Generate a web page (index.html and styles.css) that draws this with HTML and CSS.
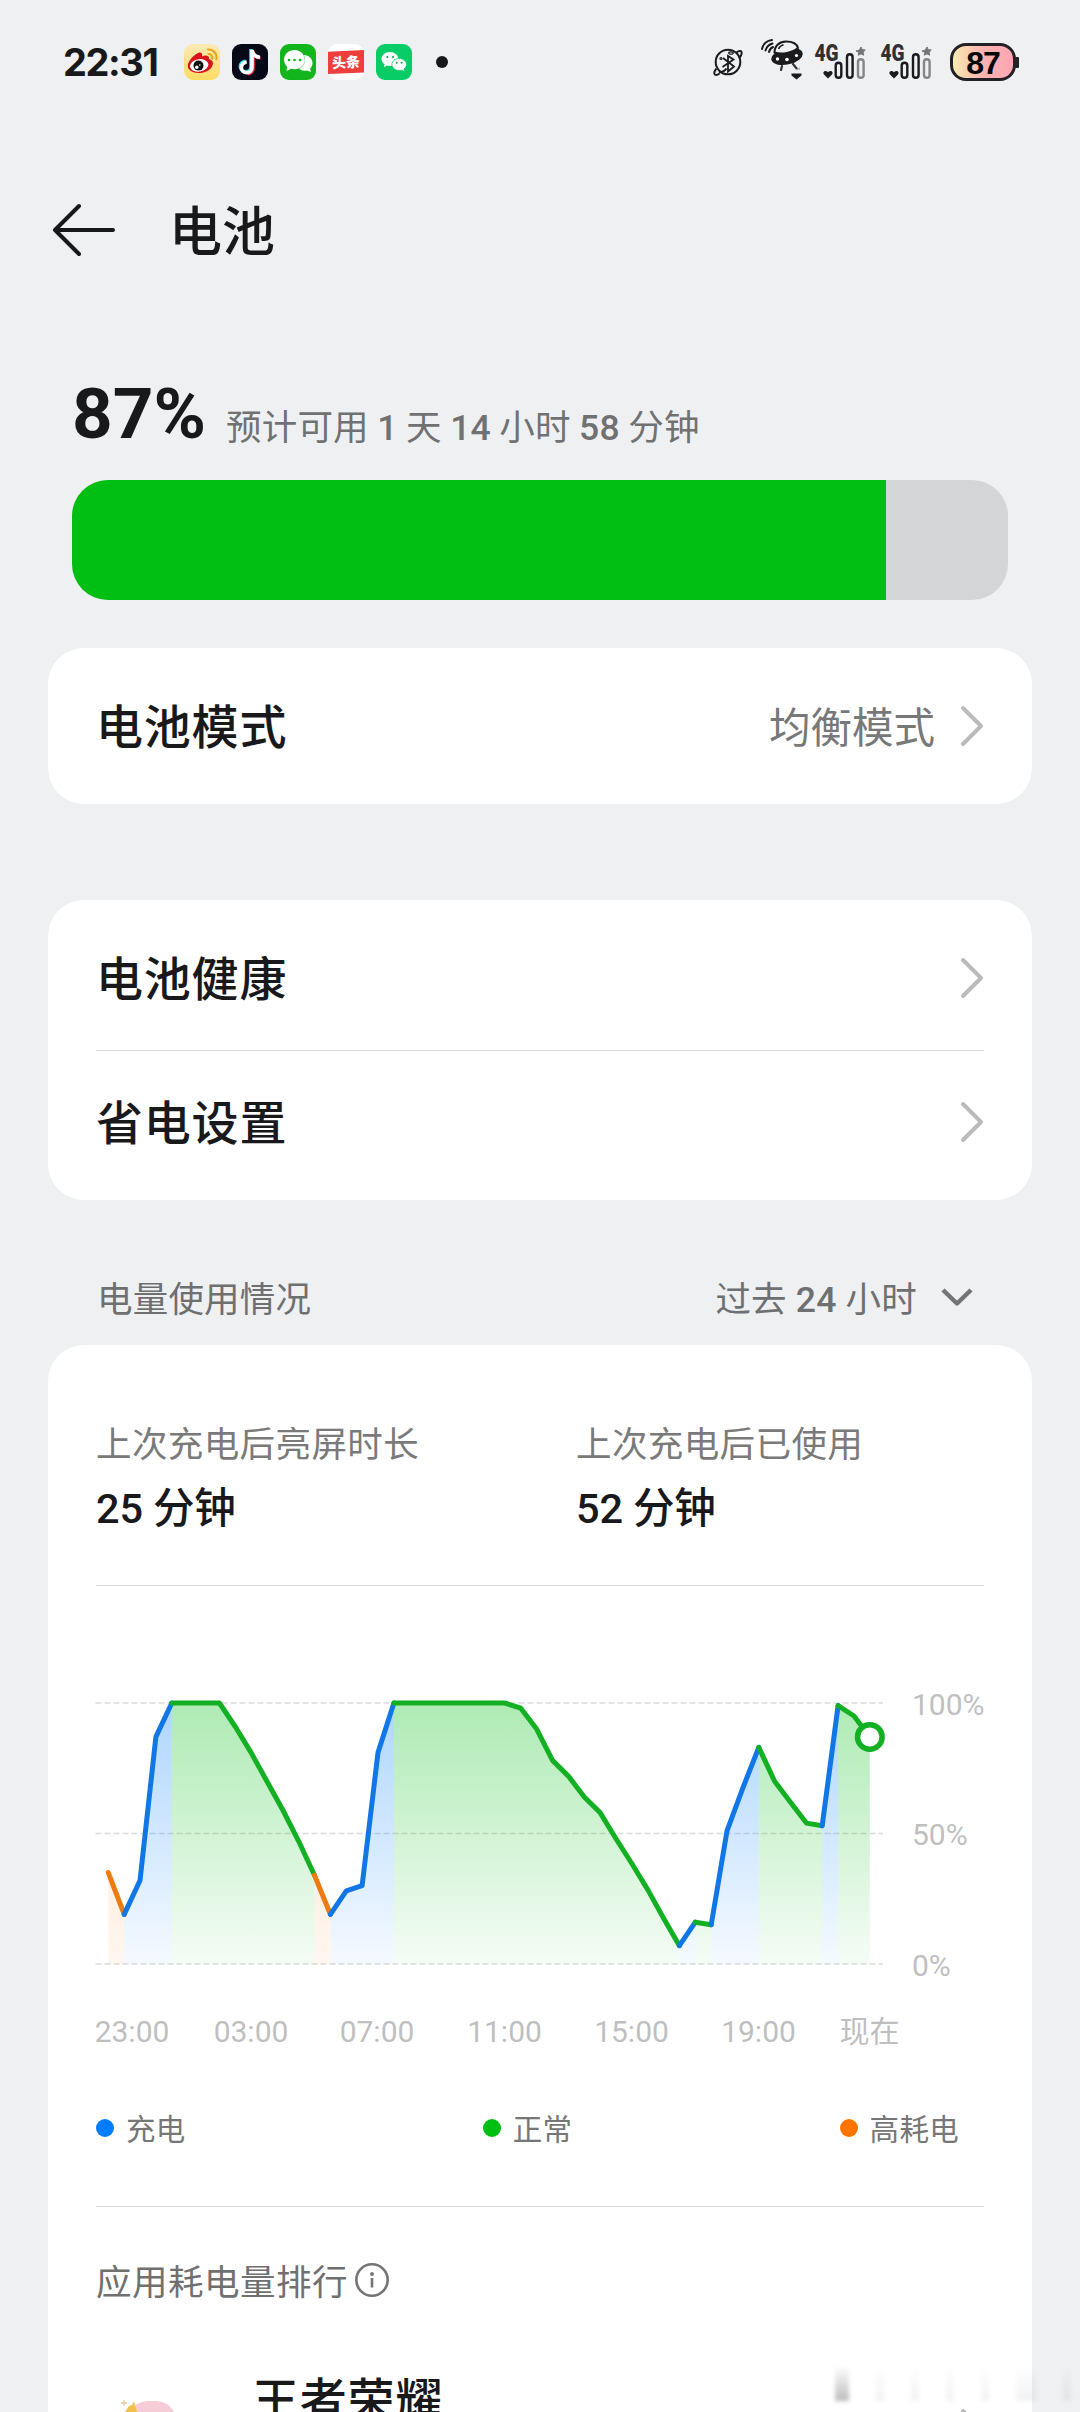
FILE: index.html
```html
<!DOCTYPE html>
<html lang="zh-CN">
<head>
<meta charset="utf-8">
<title>电池</title>
<link rel="stylesheet" href="styles.css">
</head>
<body>
<div class="screen">
  <header class="status">
    <span class="clock">22:31</span>
    <div class="apps">
      <svg class="app" viewBox="0 0 36 36">
        <defs><linearGradient id="wb" x1="0" y1="0" x2="0" y2="1"><stop offset="0" stop-color="#fbe9b4"/><stop offset="1" stop-color="#fcdc62"/></linearGradient></defs>
        <rect width="36" height="36" rx="9" fill="url(#wb)"/>
        <path d="M3.800 22c0-5 6.500-12 11-13.300 2.500-.7 4 .8 3.200 3.800 3-1.400 7.500-1.600 7 2.500 3 1 4.800 3 3.600 6.200C27 26 21.500 29 14.500 29 8.500 29 3.800 26 3.800 22z" fill="#d9141e"/>
        <ellipse cx="15.200" cy="21.400" rx="9.300" ry="6.200" fill="#fff" transform="rotate(-8 15.200 21.400)"/>
        <circle cx="14.500" cy="21.600" r="5" fill="#111"/>
        <circle cx="12.800" cy="23.200" r="1.700" fill="#fff"/><circle cx="15.800" cy="21" r=".8" fill="#fff"/>
        <path d="M24 5.500a8 8 0 0 1 8.300 9.800M24.500 10a4 4 0 0 1 3.800 4.600" fill="none" stroke="#eba51e" stroke-width="2.200" stroke-linecap="round"/>
      </svg>
      <svg class="app" viewBox="0 0 36 36">
        <rect width="36" height="36" rx="9" fill="#040817"/>
        <g fill="none" stroke-width="3.600">
          <path d="M19 5v17.500a5.300 5.300 0 1 1-5.300-5.300M19 6c.8 4 3.500 6.500 8 6.800" stroke="#35e2e8"/>
          <path d="M21 7v17.500a5.300 5.300 0 0 1-5.300 5.300M21 7.500c.8 4 3.500 6 7.500 6.300" stroke="#f52d55"/>
          <path d="M20 6v17.500a5.300 5.300 0 1 1-5.300-5.300M20 6c.8 4.500 3.500 7 8 7.300" stroke="#fff"/>
        </g>
      </svg>
      <svg class="app" viewBox="0 0 36 36">
        <rect width="36" height="36" rx="9" fill="#13b51c"/>
        <path d="M24 11c5 .6 8.500 3.500 8.500 8 0 2.200-.9 4.200-2.400 5.600L31 28l-4-1.600c-3 .8-6 .1-7.800-1.600 5-2.300 7.300-8 4.800-13.800z" fill="#fff"/>
        <path d="M14.500 6C8.800 6 4 10.200 4 15.800c0 2.800 1.200 5.200 3.200 6.900L6.500 27l4.600-2.300c1 .3 2.200.5 3.400.5 6 0 10.300-4.200 10.300-9.500S20.300 6 14.500 6z" fill="#fff"/>
        <circle cx="9" cy="16" r="1.300" fill="#13b51c"/><circle cx="14.500" cy="16" r="1.300" fill="#13b51c"/><circle cx="20" cy="16" r="1.300" fill="#13b51c"/>
      </svg>
      <svg class="app" viewBox="0 0 36 36">
        <rect width="36" height="36" rx="9" fill="#fff"/>
        <path d="M0 7.800L36 6v22.500L0 30z" fill="#ee3f3d"/>
        <text x="18" y="23.500" text-anchor="middle" class="toutiao" transform="rotate(-3 18 18)">头条</text>
      </svg>
      <svg class="app" viewBox="0 0 36 36">
        <rect width="36" height="36" rx="9" fill="#08cd66"/>
        <path d="M14 8c-4.700 0-8.400 3-8.400 6.900 0 2.200 1.200 4.100 3 5.400L8 23l3-1.500c1 .3 2 .4 3 .4 4.600 0 8.400-3.100 8.400-7S18.600 8 14 8z" fill="#fff"/>
        <path d="M23.200 14.500c4 0 7.300 2.700 7.300 6 0 1.900-1 3.500-2.600 4.600l.5 2.500-2.600-1.400c-.8.200-1.700.3-2.600.3-4 0-7.300-2.700-7.300-6s3.300-6 7.300-6z" fill="#fff" stroke="#08cd66" stroke-width=".8"/>
        <g fill="#08a553"><circle cx="11.300" cy="13" r="1.100"/><circle cx="17" cy="13" r="1.100"/><circle cx="20.800" cy="18.700" r="1"/><circle cx="25.600" cy="18.700" r="1"/></g>
      </svg>
    </div>
    <span class="more-dot"></span>
    <div class="system">
      <svg class="planet" viewBox="0 0 30 30" fill="none" stroke="#1b1b1d" stroke-width="2">
        <circle cx="15" cy="15" r="12.300"/>
        <path d="M23.500 5.500c2.500-2 5-1.800 5.200 0 .2 1.700-1.200 4-2.500 5.500M6.500 26.500C4 28.500 1.500 28.500 1.300 26.500c-.2-1.500 1-3.500 2-4.800M6 25.500c3.500-.5 6.500-2.500 7.500-4"/>
        <path d="M10 11l11 8.500-6 5V9l5.500 3.500L9.500 20" stroke-width="1.800"/>
        <circle cx="8" cy="11.500" r="1" stroke-width="1.200"/><ellipse cx="18" cy="6" rx="2.300" ry="1.200" stroke-width="1.200"/>
      </svg>
      <svg class="ufo" viewBox="0 0 42 42">
        <g fill="none" stroke="#1b1b1d" stroke-width="2" stroke-linecap="round"><path d="M1 10C2 5 6 1.500 11 1M4.500 11.500c1-3.500 3.500-6 7-7M8 13c.5-2.300 2-4 4-5"/></g>
        <ellipse cx="26" cy="17.500" rx="16" ry="8" fill="#1b1b1d" transform="rotate(-12 26 17.500)"/>
        <path d="M13.500 13.500C13.500 7 18.500 2.500 25 2.500S36 5 37 9c-5 4.500-16 7-23.500 4.500z" fill="#eff0f2" stroke="#1b1b1d" stroke-width="2"/>
        <path d="M17.500 10c1-2.300 2.500-3.700 5-4.300" fill="none" stroke="#1b1b1d" stroke-width="1.500"/>
        <circle cx="16.500" cy="20" r="1.700" fill="#fff"/><circle cx="26" cy="20.500" r="1.800" fill="#fff"/><circle cx="35.500" cy="16.500" r="1.600" fill="#fff"/>
        <path d="M21 27l-1 4M32 25l4 5" stroke="#333" stroke-width="2.200" stroke-linecap="round"/>
        <path d="M34 31l5-3v3z" fill="#bbb"/>
        <path d="M30.500 34.500h10v2l-5 4-5-4z" fill="#1b1b1d"/>
      </svg>
      <div class="cell"><svg viewBox="0 0 50 36">
        <text x="-.5" y="16.500" class="net" textLength="24" lengthAdjust="spacingAndGlyphs">4G</text>
        <path d="M13 34.500l-4-4c-2-2.500 1.500-5 4-2.200 2.500-2.800 6-.3 4 2.200z" fill="#1b1b1d"/>
        <g fill="none" stroke-width="2.400"><rect x="20.700" y="18.700" width="5.600" height="15" rx="2.800" stroke="#1b1b1d"/><rect x="32" y="10.200" width="5.600" height="23.500" rx="2.800" stroke="#1b1b1d"/><rect x="43" y="15.200" width="5.600" height="18.500" rx="2.800" stroke="#868688"/></g>
        <path d="M46 3l1.300 2.700 3 .3-2.200 2.200.6 3-2.700-1.400-2.700 1.400.5-3L41 7l3.200-.8z" fill="#747476" stroke="#747476"/>
      </svg></div>
      <div class="cell"><svg viewBox="0 0 50 36">
        <text x="-.5" y="16.500" class="net" textLength="24" lengthAdjust="spacingAndGlyphs">4G</text>
        <path d="M13 34.500l-4-4c-2-2.500 1.500-5 4-2.200 2.500-2.800 6-.3 4 2.200z" fill="#1b1b1d"/>
        <g fill="none" stroke-width="2.400"><rect x="20.700" y="18.700" width="5.600" height="15" rx="2.800" stroke="#1b1b1d"/><rect x="32" y="10.200" width="5.600" height="23.500" rx="2.800" stroke="#1b1b1d"/><rect x="43" y="15.200" width="5.600" height="18.500" rx="2.800" stroke="#868688"/></g>
        <path d="M46 3l1.300 2.700 3 .3-2.200 2.200.6 3-2.700-1.400-2.700 1.400.5-3L41 7l3.200-.8z" fill="#747476" stroke="#747476"/>
      </svg></div>
      <div class="battery">87</div>
    </div>
  </header>

  <div class="titlebar">
    <svg class="back" viewBox="0 0 64 54" fill="none" stroke="#17181a" stroke-width="4" stroke-linecap="round" stroke-linejoin="round"><path d="M27 3L3 27l24 24M3 27h58"/></svg>
    <h1>电池</h1>
  </div>

  <section class="summary">
    <div class="level"><strong>87%</strong><span>预计可用 <b>1</b> 天 <b>14</b> 小时 <b>58</b> 分钟</span></div>
    <div class="meter"><div class="meter-fill" style="width:87%"></div></div>
  </section>

  <section class="card mode">
    <div class="row"><span class="name">电池模式</span><span class="value">均衡模式</span><svg class="chev" viewBox="0 0 24 42"><path d="M3 3l18 18L3 39"/></svg></div>
  </section>

  <section class="card options">
    <div class="row"><span class="name">电池健康</span><svg class="chev" viewBox="0 0 24 42"><path d="M3 3l18 18L3 39"/></svg></div>
    <div class="rule"></div>
    <div class="row"><span class="name">省电设置</span><svg class="chev" viewBox="0 0 24 42"><path d="M3 3l18 18L3 39"/></svg></div>
  </section>

  <div class="section-head">
    <span>电量使用情况</span>
    <span class="range">过去 <b>24</b> 小时</span>
    <svg class="down" viewBox="0 0 32 20" fill="none" stroke="#737476" stroke-width="4.500" stroke-linejoin="round"><path d="M2 2l14 13.500L30 2"/></svg>
  </div>

  <section class="card usage">
    <div class="stats">
      <div><p class="label">上次充电后亮屏时长</p><p class="amount">25 分钟</p></div>
      <div><p class="label">上次充电后已使用</p><p class="amount">52 分钟</p></div>
    </div>
    <div class="rule"></div>
    <svg class="chart" id="chart" viewBox="96 1586 888 500" role="img" aria-label="电量使用情况">
      <defs>
        <linearGradient id="g-n" gradientUnits="userSpaceOnUse" x1="0" y1="1703" x2="0" y2="1964"><stop offset="0" stop-color="#00bf12" stop-opacity=".32"/><stop offset="1" stop-color="#00bf12" stop-opacity=".04"/></linearGradient>
        <linearGradient id="g-c" gradientUnits="userSpaceOnUse" x1="0" y1="1703" x2="0" y2="1964"><stop offset="0" stop-color="#007dff" stop-opacity=".32"/><stop offset="1" stop-color="#007dff" stop-opacity=".04"/></linearGradient>
        <linearGradient id="g-h" gradientUnits="userSpaceOnUse" x1="0" y1="1703" x2="0" y2="1964"><stop offset="0" stop-color="#ff7500" stop-opacity=".22"/><stop offset="1" stop-color="#ff7500" stop-opacity=".06"/></linearGradient>
      </defs>
      <g class="grid"><path d="M95.500 1703H883M95.500 1833.500H883M95.500 1964H883"/></g>
      <g id="series"></g>
      <g class="axis">
        <text x="912" y="1715">100%</text><text x="912" y="1845">50%</text><text x="912" y="1976">0%</text>
        <g text-anchor="middle"><text x="132" y="2042">23:00</text><text x="251" y="2042">03:00</text><text x="377" y="2042">07:00</text><text x="504.500" y="2042">11:00</text><text x="631.500" y="2042">15:00</text><text x="758.500" y="2042">19:00</text><text x="869.500" y="2042">现在</text></g>
      </g>
    </svg>
    <div class="legend">
      <span><i class="dot charge"></i>充电</span>
      <span><i class="dot normal"></i>正常</span>
      <span><i class="dot high"></i>高耗电</span>
    </div>
    <div class="rule"></div>
    <div class="rank-head"><span>应用耗电量排行</span><svg viewBox="0 0 36 36" fill="none" stroke="#757575" stroke-width="2.600"><circle cx="18" cy="18" r="15.700"/><path d="M18 16v9.500"/><circle cx="18" cy="12" r="1.900" fill="#757575" stroke="none"/></svg></div>
    <div class="rank-row">
      <svg class="app-icon" viewBox="0 0 96 96">
        <rect x="8" y="2" width="48" height="48" rx="20" fill="#f6cdd6"/>
        <path d="M5 13l4-6 3-1 2-4 3 11z" fill="#f3c04b"/><path d="M1 4h6M4 1v6" stroke="#f1c9a0" stroke-width="1.300"/>
      </svg>
      <span class="name">王者荣耀</span>
      <svg class="chev" viewBox="0 0 24 42"><path d="M3 3l18 18L3 39"/></svg>
    </div>
  </section>
  <div class="ghost"><i></i><i></i><i></i><i></i><i></i><i></i><i></i></div>
</div>
<script src="chart.js"></script>
</body>
</html>
```

FILE: styles.css
```css
* { box-sizing: border-box; }
body { margin: 0; background: #eff0f2; color: #19191b; font-family: Roboto, "Noto Sans CJK SC", sans-serif; }
h1, p { margin: 0; font-weight: inherit; }
b { font-weight: 500; }
.screen { position: relative; width: 1080px; height: 2412px; overflow: hidden; }

.status { display: flex; align-items: center; height: 124px; padding: 0 64px 0 63px; }
.clock { width: 121px; font: 700 38px/44px Inter, sans-serif; letter-spacing: -1.4px; }
.apps { display: flex; gap: 12px; }
.app { display: block; width: 36px; height: 36px; }
.toutiao { font: 900 14px "Noto Sans CJK SC", sans-serif; fill: #fff; }
.more-dot { width: 12px; height: 12px; margin-left: 24px; border-radius: 50%; background: #17181a; }
.system { display: flex; align-items: center; margin-left: auto; }
.planet { width: 30px; height: 30px; margin-right: 18px; }
.ufo { width: 42px; height: 42px; margin: -4px 12px 0 0; }
.cell { width: 66px; height: 36px; }
.cell svg { display: block; width: 50px; height: 36px; overflow: visible; }
.net { font: 900 23px Roboto, sans-serif; fill: #303032; }
.battery { position: relative; width: 66px; height: 38px; margin-left: 3px; border: 3px solid #222226; border-radius: 16px; background: linear-gradient(90deg, #f7ecb0, #fbb2b0 50%, #ffa6b4); color: #060606; font: 700 32px/34px "Liberation Sans", sans-serif; letter-spacing: -1px; text-align: center; }
.battery::after { content: ""; position: absolute; right: -6px; top: 11px; width: 4px; height: 11px; border-radius: 1px; background: #222226; }

.titlebar { display: flex; align-items: center; height: 212px; padding-left: 52px; }
.back { width: 64px; height: 54px; }
h1 { margin-left: 53px; padding-top: 6px; font-size: 53px; line-height: 72px; font-weight: 500; }

.summary { padding: 0 72px; }
.level { display: flex; align-items: flex-end; height: 144px; padding-bottom: 24px; }
.level strong { width: 154px; font-size: 71px; line-height: 84px; font-weight: 700; white-space: nowrap; }
.level span { font-size: 35.500px; line-height: 55px; color: #707173; letter-spacing: .2px; word-spacing: -.6px; white-space: nowrap; }
.meter { height: 120px; border-radius: 36px; background: #d4d5d7; overflow: hidden; }
.meter-fill { height: 100%; background: #00bf12; }

.card { margin: 0 48px; padding: 0 48px; border-radius: 36px; background: #fff; }
.row { display: flex; align-items: center; flex: 1; }
.name { flex: 1; padding-top: 4px; font-size: 47px; line-height: 64px; font-weight: 500; letter-spacing: .8px; }
.value { margin-right: 25px; padding-top: 5px; font-size: 41.500px; line-height: 56px; color: #77787a; }
.chev { width: 24px; height: 42px; fill: none; stroke: #bbb; stroke-width: 4; stroke-linecap: round; stroke-linejoin: round; }
.mode { display: flex; height: 156px; margin-top: 48px; }
.options { display: flex; flex-direction: column; height: 300px; margin-top: 96px; padding-top: 6px; padding-bottom: 6px; }
.rule { height: 1px; background: #dbdbdb; }

.section-head { display: flex; align-items: center; height: 145px; padding: 50px 107px 0 97px; font-size: 35.500px; line-height: 48px; letter-spacing: .2px; color: #6e6f71; }
.section-head span { padding-top: 5px; }
.range { margin-left: auto; }
.down { width: 32px; height: 20px; margin-left: 24px; }

.usage { height: 1100px; border-bottom-left-radius: 0; border-bottom-right-radius: 0; }
.stats { display: grid; grid-template-columns: 480px 1fr; height: 240px; padding-top: 76px; }
.label { font-size: 35.500px; line-height: 48px; letter-spacing: .4px; color: #7a7a7a; }
.amount { margin-top: 12px; font-size: 41.500px; line-height: 56px; font-weight: 500; letter-spacing: -.2px; }
.chart { display: block; width: 888px; height: 500px; overflow: visible; }
.grid { fill: none; stroke: #dcdcdc; stroke-width: 1.5; stroke-dasharray: 6 3; }
.line { fill: none; stroke-width: 5; stroke-linecap: round; stroke-linejoin: round; }
.line.n { stroke: #14b024; }
.line.c { stroke: #1277e6; }
.line.h { stroke: #ee7a12; }
.now { fill: #fff; stroke: #14b024; stroke-width: 5.5; }
.axis { font-size: 30px; fill: #bfbfbf; }
.legend { display: grid; grid-template-columns: repeat(3, 1fr); width: 863px; height: 120px; padding-top: 24px; font-size: 29.500px; line-height: 40px; letter-spacing: .3px; color: #777; }
.legend span { display: flex; align-items: center; height: 40px; }
.legend span:nth-child(2) { justify-content: center; }
.legend span:nth-child(3) { justify-content: flex-end; }
.dot { width: 18px; height: 18px; margin: -4px 12px 0 0; border-radius: 50%; }
.charge { background: #007dff; }
.normal { background: #00bf12; }
.high { background: #ff7500; }
.rank-head { display: flex; align-items: center; height: 146px; font-size: 35.500px; line-height: 48px; letter-spacing: .5px; color: #707070; }
.rank-head span { padding-top: 5px; }
.rank-head svg { width: 36px; height: 36px; margin-left: 6px; }
.rank-row { display: flex; align-items: flex-start; padding-top: 12px; }
.rank-row .app-icon { width: 96px; height: 96px; margin: 34px 36px 0 24px; }
.rank-row .chev { margin-top: 43px; }

.ghost { position: absolute; left: 835px; top: 2366px; width: 236px; height: 35px; display: grid; grid-template-columns: 14px 8px 8px 8px 8px 20px 8px; justify-content: space-between; }
.ghost i { background: linear-gradient(rgba(0, 0, 0, 0), rgba(0, 0, 0, .05)); filter: blur(2px); }
.ghost i:first-child { background: linear-gradient(rgba(0, 0, 0, 0), rgba(0, 0, 0, .26)); }
```

FILE: chart.js
```javascript
// Battery level at half-hour steps, oldest first
const levels = [35, 19, 32, 87, 100, 100, 100, 100, 91, 81, 70, 59, 47, 34, 19, 28, 30, 81,
  100, 100, 100, 100, 100, 100, 100, 100, 98, 90, 78, 72, 64, 58, 48, 38.5, 28.5, 17.5, 7, 16, 15,
  51, 67.5, 83, 70, 62, 54, 53, 99, 95, 87];
// Runs of one state: [kind, first index, last index]
const runs = [['h', 0, 1], ['c', 1, 4], ['n', 4, 13], ['h', 13, 14], ['c', 14, 18], ['n', 18, 36],
  ['c', 36, 37], ['n', 37, 38], ['c', 38, 41], ['n', 41, 45], ['c', 45, 46], ['n', 46, 48]];
const px = i => 108.3 + i * 15.865;
const py = v => 1964 - v * 2.61;
let areas = '', lines = '';
for (const [kind, a, b] of runs) {
  let pts = [];
  for (let i = a; i <= b; i++) pts.push(px(i).toFixed(1) + ' ' + py(levels[i]).toFixed(1));
  const d = 'M' + pts.join('L');
  areas += `<path d="${d}V1964H${px(a).toFixed(1)}Z" fill="url(#g-${kind})"/>`;
  lines += `<path class="line ${kind}" d="${d}"/>`;
}
document.getElementById('series').innerHTML =
  areas + lines + `<circle class="now" cx="${px(48)}" cy="${py(87)}" r="12.3"/>`;
```
